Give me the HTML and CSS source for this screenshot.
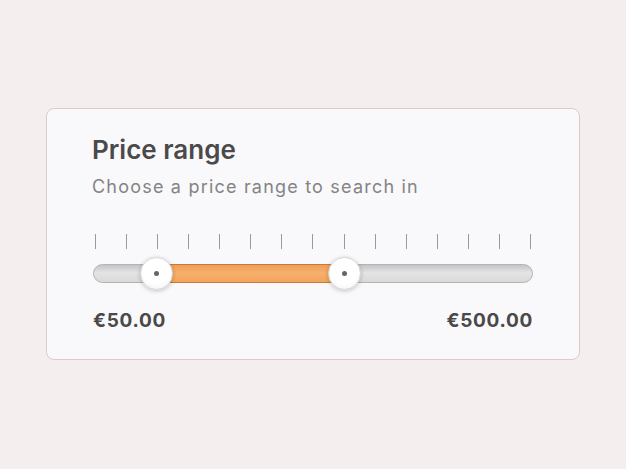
FILE: index.html
```html
<!DOCTYPE html>
<html lang="en">
<head>
    <meta charset="UTF-8" />
    <title>Price range</title>
    <link rel="stylesheet" href="styles.css">
</head>
<body>

<div class="card">
    <h2 class="title">Price range</h2>
    <p class="subtitle">Choose a price range to search in</p>

    <div class="ticks">
        <span></span><span></span><span></span><span></span><span></span>
        <span></span><span></span><span></span><span></span><span></span>
        <span></span><span></span><span></span><span></span><span></span>
    </div>

    <div class="track">
        <div class="fill" style="left: 14.3%; width: 42.8%;"></div>
        <div class="knob" style="left: 14.3%;"><i></i></div>
        <div class="knob" style="left: 57.1%;"><i></i></div>
    </div>

    <div class="values">
        <span>€50.00</span>
        <span>€500.00</span>
    </div>
</div>

</body>
</html>
```

FILE: styles.css
```css
* { box-sizing: border-box; }
body {
    margin: 0;
    padding: 108px 0 0 46px;
    background: #f4efee;
    font-family: 'Inter', sans-serif;
    height: 100vh;
}
.card {
    width: 534px;
    height: 252px;
    padding: 25px 46px 0 45px;
    background: #f9f9fb;
    border: 1px solid #dccbc8;
    border-radius: 8px;
}
.title {
    margin: 0;
    font-size: 26px;
    font-weight: 600;
    color: #4a4a4a;
    line-height: 32px;
}
.subtitle {
    margin: 9px 0 0;
    font-size: 18px;
    letter-spacing: 1.2px;
    color: #858383;
    line-height: 24px;
}
.ticks {
    display: flex;
    justify-content: space-between;
    margin: 35px 2px 0 3px;
    height: 15px;
}
.ticks span {
    width: 1px;
    height: 15px;
    background: #9a9a9a;
}
.track {
    position: relative;
    margin: 15px 0 0 1px;
    height: 19px;
    border: 1px solid #b3b3b3;
    border-radius: 10px;
    background: linear-gradient(#c4c4c4, #e4e4e4 45%, #d9d9d9);
}
.fill {
    position: absolute;
    top: -1px;
    bottom: -1px;
    background: linear-gradient(#ee9f58, #f7b06c 50%, #f2a35b);
    border: 1px solid #c97a35;
}
.knob {
    position: absolute;
    top: 50%;
    width: 33px;
    height: 33px;
    margin: -16.5px 0 0 -16.5px;
    border-radius: 50%;
    background: radial-gradient(circle at 50% 40%, #ffffff 55%, #ececec);
    border: 1px solid #d4d4d4;
    box-shadow: 0 1px 4px rgba(0,0,0,0.22);
    display: flex;
    justify-content: center;
    align-items: center;
}
.knob i {
    width: 5px;
    height: 5px;
    border-radius: 50%;
    background: #666;
}
.values {
    display: flex;
    justify-content: space-between;
    margin: 26px 0 0 1px;
    font-size: 19px;
    letter-spacing: 0.7px;
    line-height: 24px;
    font-weight: 700;
    color: #4a4848;
}
```
